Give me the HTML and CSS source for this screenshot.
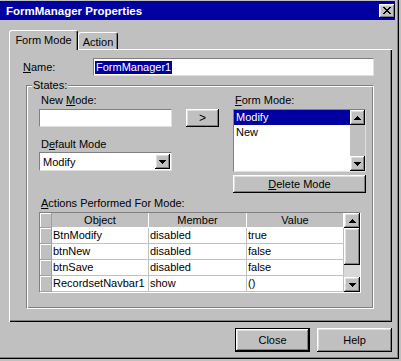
FILE: index.html
```html
<!DOCTYPE html>
<html lang="en">
<head>
  <meta charset="UTF-8">
  <meta name="viewport" content="width=device-width, initial-scale=1.0">
  <title>FormManager Properties</title>
  <link rel="stylesheet" href="styles.css">
</head>
<body>
  <div class="window">
    <div class="titlebar">
      <span class="title">FormManager Properties</span>
      <div class="btn title-close">
        <svg width="8" height="7" viewBox="0 0 8 7"><path d="M0 0h2v1H0zM6 0h2v1H6zM1 1h2v1H1zM5 1h2v1H5zM2 2h4v1H2zM3 3h2v1H3zM2 4h4v1H2zM1 5h2v1H1zM5 5h2v1H5zM0 6h2v1H0zM6 6h2v1H6z" fill="#000"/></svg>
      </div>
    </div>

    <div class="tabs">
      <div class="tab active">Form Mode</div>
      <div class="tab">Action</div>
    </div>

    <div class="panel">
      <div class="name-row">
        <span class="name-label"><u>N</u>ame:</span>
        <div class="textbox"><span class="sel">FormManager1</span></div>
      </div>

      <fieldset class="group">
        <legend>States:</legend>
        <div class="states">
          <div class="col">
            <span class="lbl">New <u>M</u>ode:</span>
            <div class="textbox field"></div>
            <span class="lbl lbl-gap">D<u>e</u>fault Mode</span>
            <div class="combo">
              <span class="combo-text">Modify</span>
              <div class="btn drop-btn">
                <svg width="7" height="4" viewBox="0 0 7 4"><path d="M0 0h7v1H0zM1 1h5v1H1zM2 2h3v1H2zM3 3h1v1H3z" fill="#000"/></svg>
              </div>
            </div>
          </div>
          <div class="mid">
            <div class="btn add-btn">&gt;</div>
          </div>
          <div class="col">
            <span class="lbl"><u>F</u>orm Mode:</span>
            <div class="listbox">
              <div class="items">
                <div class="item selected">Modify</div>
                <div class="item">New</div>
              </div>
              <div class="vscroll">
                <div class="btn arrow">
                  <svg width="7" height="4" viewBox="0 0 7 4"><path d="M3 0h1v1H3zM2 1h3v1H2zM1 2h5v1H1zM0 3h7v1H0z" fill="#000"/></svg>
                </div>
                <div class="track"></div>
                <div class="btn arrow">
                  <svg width="7" height="4" viewBox="0 0 7 4"><path d="M0 0h7v1H0zM1 1h5v1H1zM2 2h3v1H2zM3 3h1v1H3z" fill="#000"/></svg>
                </div>
              </div>
            </div>
            <div class="btn delete-btn"><span><u>D</u>elete Mode</span></div>
          </div>
        </div>

        <span class="lbl actions-lbl"><u>A</u>ctions Performed For Mode:</span>
        <div class="grid-box">
          <div class="grid">
            <div class="hd sel-cell"></div>
            <div class="hd">Object</div>
            <div class="hd">Member</div>
            <div class="hd">Value</div>

            <div class="sel-cell"></div>
            <div class="cell">BtnModify</div>
            <div class="cell">disabled</div>
            <div class="cell">true</div>

            <div class="sel-cell"></div>
            <div class="cell">btnNew</div>
            <div class="cell">disabled</div>
            <div class="cell">false</div>

            <div class="sel-cell"></div>
            <div class="cell">btnSave</div>
            <div class="cell">disabled</div>
            <div class="cell">false</div>

            <div class="sel-cell"></div>
            <div class="cell">RecordsetNavbar1</div>
            <div class="cell">show</div>
            <div class="cell">()</div>
          </div>
          <div class="vscroll grid-scroll">
            <div class="btn arrow">
              <svg width="7" height="4" viewBox="0 0 7 4"><path d="M3 0h1v1H3zM2 1h3v1H2zM1 2h5v1H1zM0 3h7v1H0z" fill="#000"/></svg>
            </div>
            <div class="btn thumb"></div>
            <div class="track"></div>
            <div class="btn arrow">
              <svg width="7" height="4" viewBox="0 0 7 4"><path d="M0 0h7v1H0zM1 1h5v1H1zM2 2h3v1H2zM3 3h1v1H3z" fill="#000"/></svg>
            </div>
          </div>
        </div>
      </fieldset>
    </div>

    <div class="footer">
      <div class="btn default">Close</div>
      <div class="btn">Help</div>
    </div>
  </div>
</body>
</html>
```

FILE: styles.css
```css
body { margin: 0; background: #c0c0c0; font-family: "Liberation Sans", Arial, sans-serif; font-size: 11px; color: #000; }
u { text-decoration: underline; text-underline-offset: 1px; }

.window { width: 399px; height: 359px; box-sizing: border-box; padding: 1px 4px 0 0; background: #c0c0c0; box-shadow: inset -1px -1px #000, inset -2px -2px #808080; }

.titlebar { height: 19px; background: #0000a0; color: #fff; display: flex; align-items: center; justify-content: space-between; padding-left: 6px; }
.title { font-weight: bold; font-size: 11.5px; }

/* raised 3d look shared by every button-like box */
.btn { background: #c0c0c0; box-sizing: border-box; display: flex; align-items: center; justify-content: center; box-shadow: inset -1px -1px #000, inset 1px 1px #fff, inset -2px -2px #808080, inset 2px 2px #dfdfdf; }
.title-close { width: 16px; height: 14px; }

.tabs { display: flex; align-items: flex-end; height: 19px; margin: 10px 0 0 9px; position: relative; z-index: 1; }
.tab { height: 17px; box-sizing: border-box; display: flex; align-items: center; justify-content: center; background: #c0c0c0; border: 1px solid; border-color: #fff #000 transparent #fff; border-bottom: none; border-radius: 3px 3px 0 0; box-shadow: inset -1px 0 #808080; }
.tab.active { width: 69px; height: 20px; margin-bottom: -1px; padding-bottom: 1px; }
.tab:not(.active) { width: 40px; padding-top: 1px; }

.panel { width: 383px; height: 273px; margin-left: 9px; box-sizing: border-box; padding: 9px 18px 0 14px; box-shadow: inset 1px 1px #fff, inset -1px -1px #000, inset -2px -2px #808080; }

.name-row { display: flex; align-items: center; height: 18px; }
.name-label { width: 70px; }
.textbox { flex: 1; height: 18px; box-sizing: border-box; background: #fff; border: 1px solid; border-color: #808080 #dfdfdf #dfdfdf #808080; display: flex; align-items: center; padding-left: 1px; }
.sel { background: #0000a0; color: #fff; line-height: 13px; padding: 0 1px; }

.group { width: 348px; box-sizing: border-box; margin: 3px 0 0 3px; padding: 2px 7px 15px 12px; min-width: 0; border: 1px solid; border-color: #808080 #fff #fff #808080; box-shadow: inset 1px 1px #fff, inset -1px -1px #808080; }
.group legend { line-height: 13px; padding: 0 1px; margin-left: -7px; background: #c0c0c0; }

.states { display: flex; }
.col { width: 133px; display: flex; flex-direction: column; }
.lbl { line-height: 13px; padding-left: 2px; }
.field { flex: none; margin-top: 2px; }
.lbl-gap { margin-top: 11px; }

.combo { margin-top: 1px; height: 19px; box-sizing: border-box; background: #fff; border: 1px solid; border-color: #808080 #dfdfdf #dfdfdf #808080; display: flex; align-items: center; padding: 1px; }
.combo-text { flex: 1; padding-left: 2px; }
.drop-btn { width: 15px; height: 15px; }

.mid { flex: 1; display: flex; justify-content: center; }
.add-btn { width: 33px; height: 18px; margin-top: 15px; font-size: 12px; }

.listbox { margin-top: 2px; height: 63px; box-sizing: border-box; background: #fff; border: 1px solid; border-color: #808080 #dfdfdf #dfdfdf #808080; display: flex; }
.items { flex: 1; }
.item { height: 15px; line-height: 15px; padding-left: 2px; }
.item.selected { background: #0000a0; color: #fff; }
.vscroll { width: 15px; display: flex; flex-direction: column; background: #c0c0c0; }
.arrow { height: 15px; flex: none; }
.track { flex: 1; background: #d8d8d8; }
.listbox .track { background: #c0c0c0; }
.delete-btn { margin-top: 3px; height: 18px; }

.actions-lbl { display: block; margin-top: 4px; }
.grid-box { margin-top: 2px; width: 322px; height: 81px; box-sizing: border-box; border: 1px solid; border-color: #808080 #fff #fff #808080; display: flex; background: #c0c0c0; }
.grid { display: grid; grid-template-columns: 12px 97px 98px 97px; grid-template-rows: 15px repeat(4, 16px); align-self: flex-start; }
.grid > div { box-sizing: border-box; border-right: 1px solid #c0c0c0; border-bottom: 1px solid #c0c0c0; line-height: 15px; white-space: nowrap; overflow: hidden; }
.hd { background: #c0c0c0; text-align: center; border-color: #fff !important; line-height: 14px !important; }
.sel-cell { background: #c0c0c0; box-shadow: inset 1px 1px #fff; border-color: #a0a0a0 !important; }
.cell { background: #fff; padding-left: 1px; }
.grid-scroll { width: 16px; height: 79px; }
.thumb { height: 37px; flex: none; }

.footer { display: flex; justify-content: flex-end; gap: 7px; width: 392px; margin-top: 6px; }
.footer .btn { width: 75px; height: 24px; }
.footer .default { border: 1px solid #000; }
```
